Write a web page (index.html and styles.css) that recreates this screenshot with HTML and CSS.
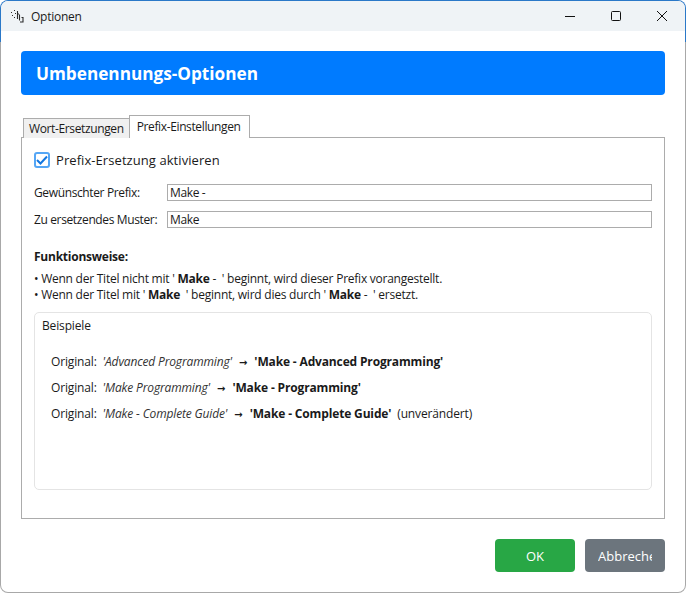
FILE: index.html
```html
<!DOCTYPE html>
<html>

<head>
    <meta charset="UTF-8">
    <title>Optionen</title>
    <link rel="stylesheet" href="styles.css">
</head>

<body>
    <div class="window">
        <div class="inner">
            <div class="titlebar">
                <svg class="app-icon" width="14" height="14" viewBox="0 0 14 14" fill="none" stroke="#2b2b2b">
                    <path d="M0 3.500h2M3 1.500h2M1 6.500h2M4 4.500h2M3 8.500h2" stroke-dasharray="1 1"/>
                    <path d="M6.500 2v8M6.500 5h1.500M8.500 5.500v6M10.500 8.500h1.500v4.500h-3" stroke-width="1.100"/>
                </svg>
                <span class="title">Optionen</span>
                <div class="win-buttons">
                    <svg width="12" height="12" viewBox="0 0 12 12" fill="none" stroke="#111"><path d="M1 6.500h10"/></svg>
                    <svg width="12" height="12" viewBox="0 0 12 12" fill="none" stroke="#111"><rect x="1.500" y="1.500" width="9" height="9" rx="1"/></svg>
                    <svg width="12" height="12" viewBox="0 0 12 12" fill="none" stroke="#111"><path d="M1 1l10 10M11 1L1 11"/></svg>
                </div>
            </div>

            <div class="content">
                <div class="header">Umbenennungs-Optionen</div>

                <div class="tabs">
                    <div class="tab">Wort-Ersetzungen</div>
                    <div class="tab active">Prefix-Einstellungen</div>
                </div>

                <div class="panel">
                    <label class="check">
                        <span class="box">
                            <svg width="12" height="10" viewBox="0 0 12 10" fill="none" stroke="#1477e0" stroke-width="2"><path d="M1 5l3.500 3.500L11 1.500"/></svg>
                        </span>
                        Prefix-Ersetzung aktivieren
                    </label>

                    <div class="form">
                        <label>Gewünschter Prefix:</label>
                        <div class="input">Make -</div>
                        <label>Zu ersetzendes Muster:</label>
                        <div class="input">Make</div>
                    </div>

                    <div class="how">
                        <h4>Funktionsweise:</h4>
                        <p>• Wenn der Titel nicht mit ' <b>Make</b> -&nbsp; ' beginnt, wird dieser Prefix vorangestellt.</p>
                        <p>• Wenn der Titel mit ' <b>Make</b>&nbsp; ' beginnt, wird dies durch ' <b>Make</b> -&nbsp; ' ersetzt.</p>
                    </div>

                    <div class="examples">
                        <div class="ex-title">Beispiele</div>
                        <div class="ex-row">Original:&nbsp; <i>'Advanced Programming'</i><span class="arrow">→</span><b>'Make - Advanced Programming'</b></div>
                        <div class="ex-row">Original:&nbsp; <i>'Make Programming'</i><span class="arrow">→</span><b>'Make - Programming'</b></div>
                        <div class="ex-row">Original:&nbsp; <i>'Make - Complete Guide'</i><span class="arrow">→</span><b>'Make - Complete Guide'</b>&nbsp; (unverändert)</div>
                    </div>
                </div>

                <div class="actions">
                    <button class="btn ok">OK</button>
                    <button class="btn cancel"><span>Abbrechen</span></button>
                </div>
            </div>
        </div>
    </div>
</body>

</html>
```

FILE: styles.css
```css
* {
    margin: 0;
    padding: 0;
    box-sizing: border-box;
}

body {
    width: 686px;
    height: 593px;
    overflow: hidden;
    background: #fff;
    font-family: "Open Sans", "Noto Sans", sans-serif;
    font-size: 12px;
    letter-spacing: -0.24px;
    color: #1a1a1a;
}

/* blue frame only reaches down past the title bar, the rest is grey */
.window {
    width: 686px;
    height: 593px;
    padding: 1px;
    background: linear-gradient(#2a78c8 42px, #a8a8a8 42px);
    border-radius: 8px;
}

.inner {
    height: 100%;
    background: #fff;
    border-radius: 7px;
    overflow: hidden;
    display: flex;
    flex-direction: column;
}

.titlebar {
    height: 30px;
    background: #eff3f6;
    display: flex;
    align-items: center;
    padding-left: 10px;
}

.title {
    margin-left: 6px;
}

.win-buttons {
    margin-left: auto;
    display: flex;
    gap: 34px;
    padding-right: 17px;
}

.content {
    flex: 1;
    padding: 20px 20px 0 20px;
}

.header {
    height: 44px;
    background: #007bff;
    border-radius: 4px;
    color: #fff;
    font-size: 17.2px;
    font-weight: 700;
    letter-spacing: 0;
    line-height: 45px;
    padding-left: 15px;
}

.tabs {
    display: flex;
    align-items: flex-end;
    height: 22px;
    margin-top: 20px;
    padding-left: 2px;
}

.tab {
    height: 20px;
    line-height: 19px;
    padding: 0 5px;
    background: #f0f0f0;
    border: 1px solid #acacac;
    border-bottom: 0;
    margin-bottom: -1px;
    position: relative;
    letter-spacing: -0.37px;
}

.tab.active {
    height: 23px;
    background: #fff;
    line-height: 21px;
    padding: 0 8px 0 7px;
    margin-left: -1px;
    margin-bottom: -1px;
    z-index: 1;
}

.panel {
    height: 382px;
    border: 1px solid #acacac;
    padding: 12px 12px 0 12px;
}

.check {
    display: flex;
    align-items: center;
    gap: 6px;
    font-size: 13px;
    letter-spacing: 0.07px;
    height: 20px;
}

.box {
    width: 16px;
    height: 16px;
    border: 2px solid #55a6f5;
    border-radius: 3px;
    background: #fff;
    display: flex;
    align-items: center;
    justify-content: center;
}

.form {
    display: grid;
    grid-template-columns: 133px 485px;
    row-gap: 10px;
    align-items: center;
    margin-top: 14px;
    letter-spacing: -0.37px;
}

.input {
    height: 17px;
    border: 1px solid #acacac;
    line-height: 15px;
    padding-left: 2px;
}

.how {
    margin-top: 21px;
    line-height: 16px;
}

.how h4 {
    font-size: 12px;
    font-weight: 700;
    margin-bottom: 6px;
}

.examples {
    height: 178px;
    margin-top: 9px;
    border: 1px solid #e4e4e4;
    border-radius: 5px;
    padding: 4px 7px;
    letter-spacing: -0.15px;
}

.ex-title {
    margin-bottom: 20px;
}

.ex-row {
    height: 26px;
    line-height: 16px;
    padding-left: 9px;
}

.ex-row i {
    color: #333;
}

.arrow {
    font-family: "DejaVu Sans", sans-serif;
    font-size: 10px;
    font-weight: 700;
    letter-spacing: 0;
    margin: 0 7px;
}

.actions {
    display: flex;
    justify-content: flex-end;
    gap: 10px;
    margin-top: 20px;
}

.btn {
    width: 80px;
    height: 33px;
    border: 0;
    border-radius: 4px;
    color: #fff;
    font-family: inherit;
    font-size: 13px;
}

.ok {
    background: #28a745;
}

.cancel {
    background: #6c757d;
    padding: 0 13px;
    text-align: left;
}

.cancel span {
    display: block;
    overflow: hidden;
    white-space: nowrap;
    width: 54px;
}
```
